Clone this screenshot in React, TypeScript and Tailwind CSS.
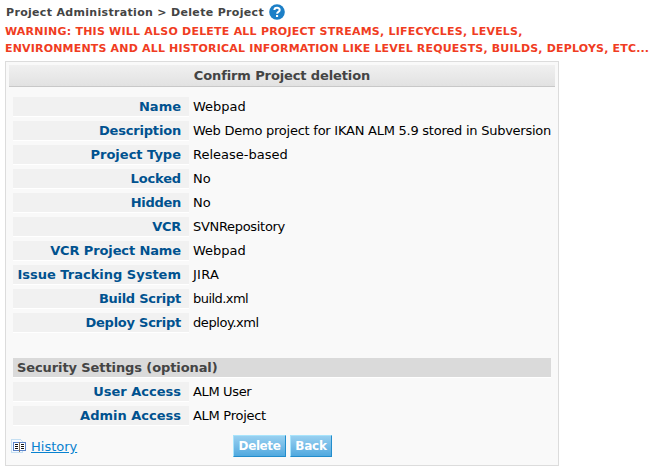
import React from "react";

type Field = { label: string; value: string; labelTracking: string; valueTracking: string };

const details: Field[] = [
  { label: "Name", value: "Webpad", labelTracking: "", valueTracking: "" },
  { label: "Description", value: "Web Demo project for IKAN ALM 5.9 stored in Subversion", labelTracking: "tracking-[-0.18px]", valueTracking: "tracking-[-0.245px]" },
  { label: "Project Type", value: "Release-based", labelTracking: "", valueTracking: "" },
  { label: "Locked", value: "No", labelTracking: "tracking-[-0.15px]", valueTracking: "" },
  { label: "Hidden", value: "No", labelTracking: "tracking-[-0.3px]", valueTracking: "" },
  { label: "VCR", value: "SVNRepository", labelTracking: "tracking-[-0.3px]", valueTracking: "tracking-[-0.31px]" },
  { label: "VCR Project Name", value: "Webpad", labelTracking: "tracking-[-0.12px]", valueTracking: "" },
  { label: "Issue Tracking System", value: "JIRA", labelTracking: "", valueTracking: "tracking-[0.25px]" },
  { label: "Build Script", value: "build.xml", labelTracking: "tracking-[-0.27px]", valueTracking: "tracking-[-0.55px]" },
  { label: "Deploy Script", value: "deploy.xml", labelTracking: "tracking-[-0.25px]", valueTracking: "tracking-[-0.42px]" },
];

const access: Field[] = [
  { label: "User Access", value: "ALM User", labelTracking: "", valueTracking: "tracking-[-0.35px]" },
  { label: "Admin Access", value: "ALM Project", labelTracking: "", valueTracking: "tracking-[-0.28px]" },
];

function Row({ field }: { field: Field }) {
  return (
    <div className="flex h-5 items-stretch">
      <div className="w-[176px] shrink-0 border-b border-white bg-[#f1f1f1] pr-2 text-right font-bold leading-[19px] text-[#00528f]">
        <span className={field.labelTracking}>{field.label}</span>
      </div>
      <div className="pl-1 leading-[19px] text-black">
        <span className={field.valueTracking}>{field.value}</span>
      </div>
    </div>
  );
}

function HelpIcon() {
  return (
    <svg className="block" width="16" height="16" viewBox="0 0 16 16">
      <circle cx="8" cy="8" r="7.8" fill="#1c7fc7" />
      <path d="M5.4 6.1C5.4 3.1 10.7 3 10.7 6C10.7 7.9 8.1 7.9 8.1 9.8" fill="none" stroke="#fff" strokeWidth="2" />
      <rect x="7" y="11" width="2.1" height="2" fill="#fff" />
    </svg>
  );
}

function HistoryIcon() {
  return (
    <svg className="block" width="15" height="14" viewBox="0 0 15 14" shapeRendering="crispEdges">
      <path d="M.5 .5H9.5L11.5 2.5V13.5H.5Z" fill="#f5faff" stroke="#c5dff2" />
      <rect x="2.5" y="3.5" width="12" height="8" fill="#fff" stroke="#5b83c8" />
      <rect x="8" y="3" width="1" height="10" fill="#85715c" />
      <path d="M4 5.5H7M4 7.5H7M4 9.5H7M10 5.5H13M10 7.5H13M10 9.5H13" stroke="#111" />
    </svg>
  );
}

export default function App() {
  return (
    <div className="h-[473px] w-[659px] overflow-hidden bg-white pl-[5px] pt-1 font-['Verdana','DejaVu_Sans',sans-serif] text-[13px] whitespace-nowrap">
      <div className="flex h-4 items-start pl-px text-[11px] font-bold leading-[17px] text-[#444]">
        <span className="w-[263px] tracking-[0.32px]">Project Administration &gt; Delete Project</span>
        <HelpIcon />
      </div>
      <div className="mt-[3px] text-[11px] font-bold leading-[17px] text-[#f03c22]">
        <div className="tracking-[0.225px]">WARNING: THIS WILL ALSO DELETE ALL PROJECT STREAMS, LIFECYCLES, LEVELS,</div>
        <div className="tracking-[0.18px]">ENVIRONMENTS AND ALL HISTORICAL INFORMATION LIKE LEVEL REQUESTS, BUILDS, DEPLOYS, ETC...</div>
      </div>
      <div className="mt-1 h-[405px] w-[554px] border border-[#dcdcdc] bg-[#f9f9f9] p-[3px]">
        <div className="h-[22px] border-b border-[#c8c8c8] bg-linear-to-b from-[#f0f0f0] to-[#e2e2e2] text-center font-bold leading-[21px] tracking-[-0.12px] text-[#444]">
          Confirm Project deletion
        </div>
        <div className="flex flex-col gap-1 px-1 pt-[10px]">
          {details.map((f) => <Row key={f.label} field={f} />)}
          <div className="mt-[21px] h-5 border-b border-white bg-[#dadada] pl-1 font-bold leading-[19px] tracking-[-0.1px] text-[#444]">
            Security Settings (optional)
          </div>
          {access.map((f) => <Row key={f.label} field={f} />)}
        </div>
        <div className="mt-[9px] flex h-[22px] items-center pl-[2px]">
          <div className="flex h-[22px] w-[222px] items-start gap-[5px] pt-1">
            <HistoryIcon />
            <a className="leading-4 text-[#0882d0] underline">History</a>
          </div>
          <div className="flex gap-1 text-[12px] font-bold leading-[19px] text-white">
            <button className="h-[22px] w-[53px] border border-t-[#a8e4fc] border-l-[#a8e4fc] border-r-[#238dcc] border-b-[#238dcc] bg-linear-to-b from-[#98d0f0] to-[#50a9df] tracking-[-0.4px]">Delete</button>
            <button className="h-[22px] w-[42px] border border-t-[#a8e4fc] border-l-[#a8e4fc] border-r-[#238dcc] border-b-[#238dcc] bg-linear-to-b from-[#98d0f0] to-[#50a9df] tracking-[-0.2px]">Back</button>
          </div>
        </div>
      </div>
    </div>
  );
}
